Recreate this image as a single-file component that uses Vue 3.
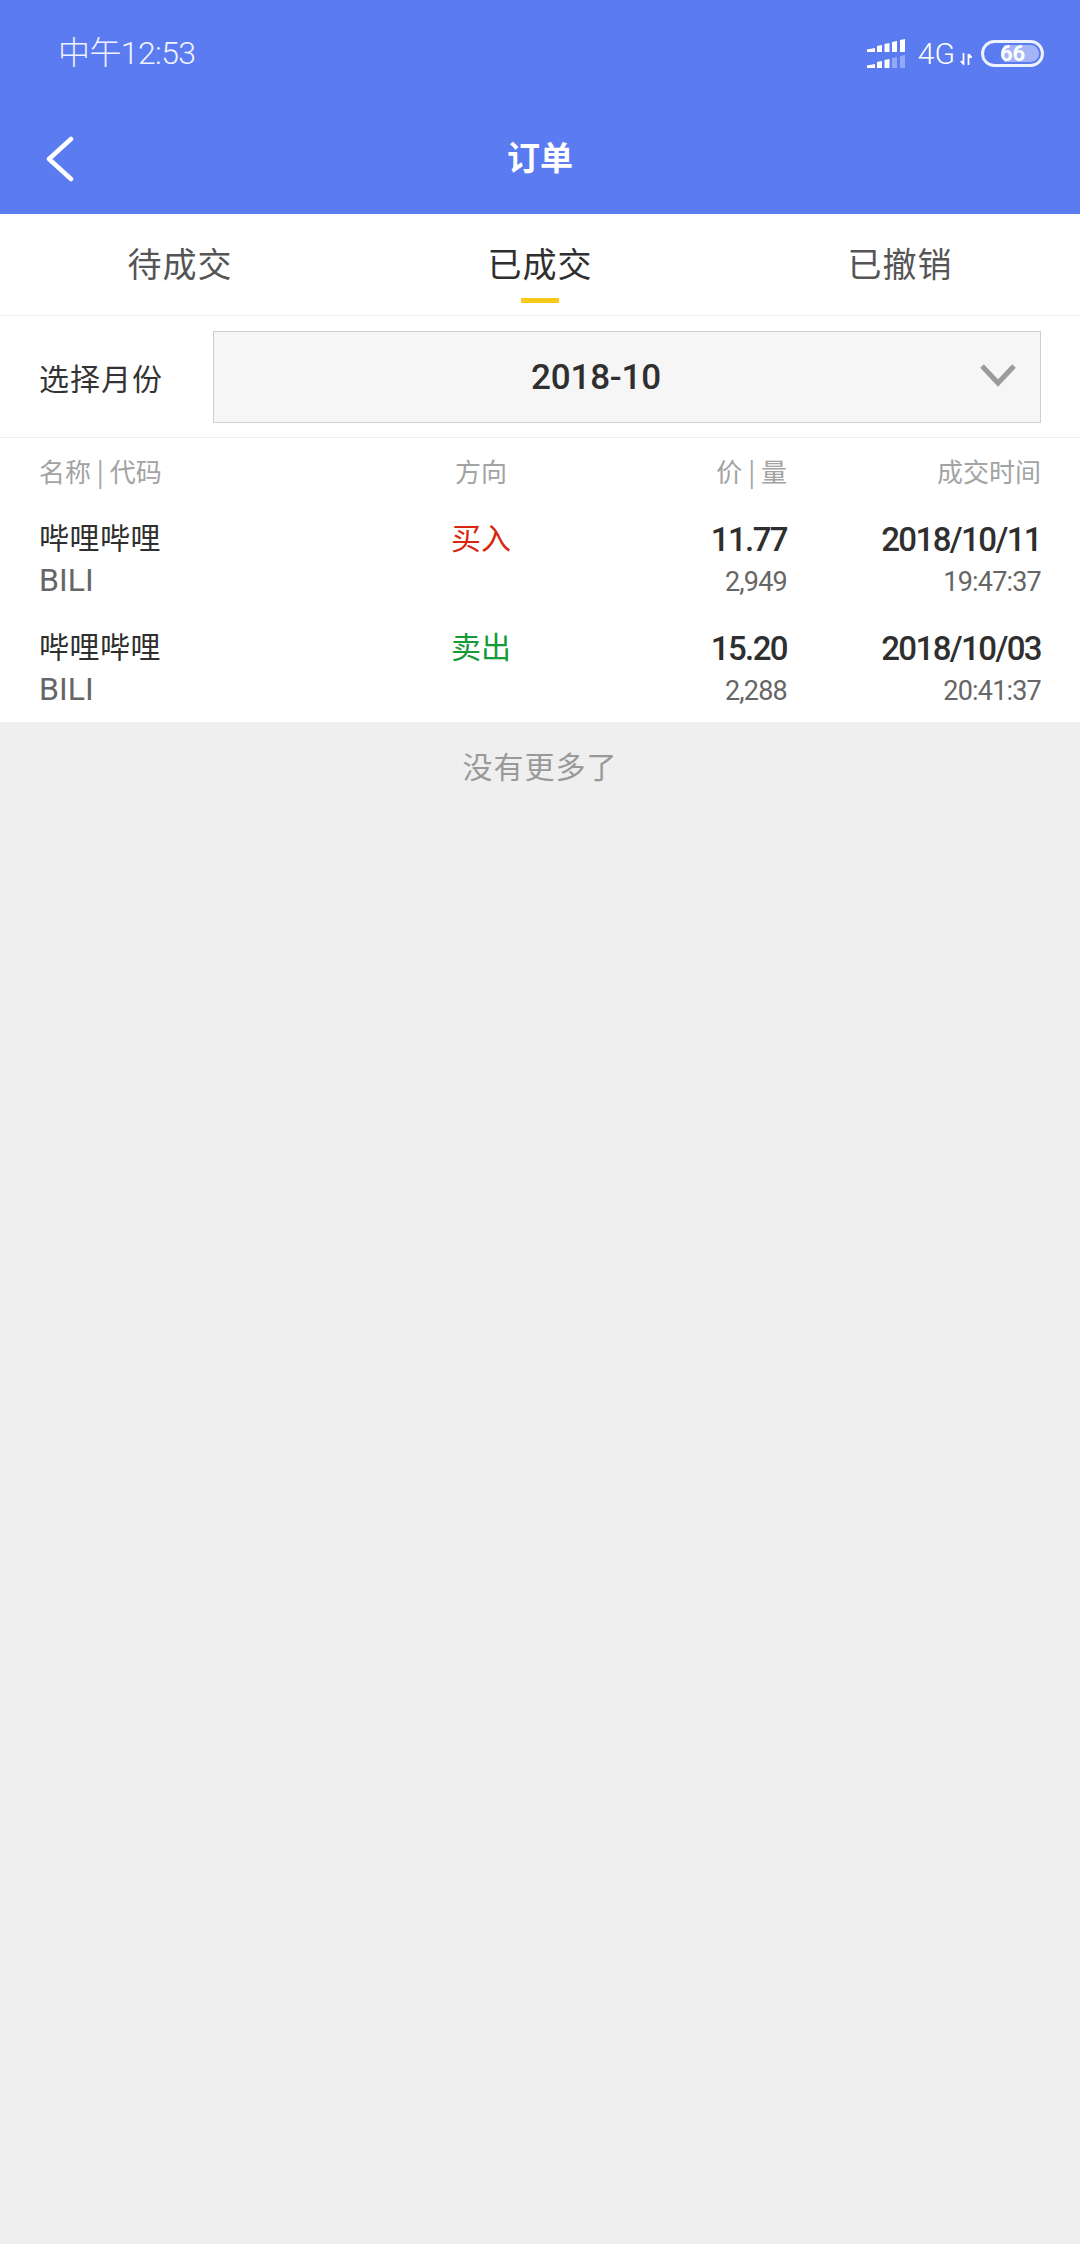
<script setup>
import { ref } from 'vue'

const tabs = ['待成交', '已成交', '已撤销']
const activeTab = ref(1)
const columns = ['名称 | 代码', '方向', '价 | 量', '成交时间']
const orders = [
  { name: '哔哩哔哩', code: 'BILI', side: '买入', buy: true, price: '11.77', qty: '2,949', date: '2018/10/11', time: '19:47:37' },
  { name: '哔哩哔哩', code: 'BILI', side: '卖出', buy: false, price: '15.20', qty: '2,288', date: '2018/10/03', time: '20:41:37' },
]
const bars = [
  'M0 13V10.5L8 9V13Z',
  'M10 13V7L15 6V13Z',
  'M17.5 13V5L22.5 4V13Z',
  'M25 13V3L30 2V13Z',
  'M33 13V1L38 0V13Z',
]
</script>

<template>
  <div class="page">
    <header class="top">
      <div class="status">
        <span class="clock">中午12:53</span>
        <div class="status-right">
          <svg class="signal" width="38" height="29" viewBox="0 0 38 29">
            <path v-for="d in bars" :key="d" :d="d" fill="#fff" />
            <g transform="translate(0 16)">
              <path v-for="(d, i) in bars" :key="d" :d="d" fill="#fff" :opacity="i > 2 ? 0.35 : 1" />
            </g>
          </svg>
          <span class="net">4G</span>
          <svg class="arrows" width="12" height="12" viewBox="0 0 12 12">
            <path d="M3.5 0V11M0.8 8L3.5 11L3.5 8M8.5 12V1M8.5 1L11.2 4H8.5" stroke="#fff" stroke-width="1.8" fill="none" />
          </svg>
          <div class="battery">
            <div class="battery-fill"></div>
            <span class="battery-text">66</span>
          </div>
        </div>
      </div>
      <div class="nav">
        <svg class="back" width="30" height="46" viewBox="0 0 30 46">
          <path d="M26 3L4 23L26 43" stroke="#fff" stroke-width="4.5" stroke-linecap="round" stroke-linejoin="round" fill="none" />
        </svg>
        <span class="title">订单</span>
      </div>
    </header>

    <nav class="tabs">
      <div v-for="(tab, i) in tabs" :key="tab" class="tab" :class="{ active: i === activeTab }" @click="activeTab = i">
        {{ tab }}
      </div>
    </nav>

    <div class="filter">
      <span class="filter-label">选择月份</span>
      <div class="select">
        <span class="select-value">2018-10</span>
        <svg class="select-arrow" width="38" height="24" viewBox="0 0 38 24">
          <path d="M3 3L19 20L35 3" stroke="#9b9b9b" stroke-width="5" fill="none" />
        </svg>
      </div>
    </div>

    <section class="list">
      <div class="row head">
        <span v-for="(col, i) in columns" :key="col" :class="'col-' + i">{{ col }}</span>
      </div>
      <div v-for="order in orders" :key="order.date" class="row order">
        <div class="col-0">
          <div class="name">{{ order.name }}</div>
          <div class="code">{{ order.code }}</div>
        </div>
        <div class="col-1">
          <div class="side" :class="order.buy ? 'buy' : 'sell'">{{ order.side }}</div>
        </div>
        <div class="col-2">
          <div class="num">{{ order.price }}</div>
          <div class="sub">{{ order.qty }}</div>
        </div>
        <div class="col-3">
          <div class="num">{{ order.date }}</div>
          <div class="sub">{{ order.time }}</div>
        </div>
      </div>
    </section>

    <div class="no-more">没有更多了</div>
  </div>
</template>

<style>
html, body {
  margin: 0;
  background: #efefef;
}
</style>

<style scoped>
.page {
  min-height: 2244px;
  background: #efefef;
  font-family: "Noto Sans CJK SC", "Noto Sans", sans-serif;
}
.top {
  background: #5b7bf0;
  color: #fff;
  height: 214px;
}
.status {
  height: 106px;
  padding: 0 36px 0 58px;
  display: flex;
  align-items: center;
  justify-content: space-between;
}
.clock {
  font-family: Roboto, "Noto Sans CJK SC", sans-serif;
  font-size: 32px;
  font-weight: 300;
  line-height: 40px;
  letter-spacing: -0.6px;
  color: #f0f3ff;
}
.status-right {
  display: flex;
  align-items: center;
}
.net {
  margin-left: 13px;
  font-family: Roboto, sans-serif;
  font-size: 30px;
  font-weight: 300;
}
.arrows {
  margin: 12px 9px 0 5px;
}
.battery {
  position: relative;
  width: 63px;
  height: 27px;
  box-sizing: border-box;
  border: 3px solid #eef1ff;
  border-radius: 14px;
  display: flex;
  align-items: center;
  justify-content: center;
  overflow: hidden;
}
.battery-fill {
  position: absolute;
  left: 20px;
  top: 2px;
  bottom: 2px;
  right: 2px;
  background: #a3b5f7;
  border-radius: 0 9px 9px 0;
}
.battery-text {
  position: relative;
  font-family: Roboto, sans-serif;
  font-size: 22px;
  font-weight: 700;
}
.nav {
  position: relative;
  height: 108px;
  display: flex;
  align-items: center;
  justify-content: center;
}
.back {
  position: absolute;
  left: 45px;
  top: 30px;
}
.title {
  font-size: 33px;
  font-weight: 700;
  line-height: 1;
  margin-top: -8px;
}
.tabs {
  height: 101px;
  background: #fff;
  border-bottom: 1px solid #eeeeee;
  display: flex;
}
.tab {
  position: relative;
  flex: 1;
  text-align: center;
  font-size: 34px;
  line-height: 98px;
  letter-spacing: 1px;
  color: #555;
  cursor: pointer;
}
.tab.active {
  color: #2f2f2f;
}
.tab.active::after {
  content: "";
  position: absolute;
  left: 50%;
  margin-left: -19px;
  bottom: 12px;
  width: 38px;
  height: 5px;
  background: #f8c91c;
}
.filter {
  height: 122px;
  box-sizing: border-box;
  background: #fff;
  border-bottom: 1px solid #eeeeee;
  padding: 0 39px;
  display: flex;
  align-items: center;
  justify-content: space-between;
}
.filter-label {
  font-size: 30px;
  letter-spacing: 1px;
  color: #333;
}
.select {
  position: relative;
  box-sizing: border-box;
  width: 828px;
  height: 92px;
  padding-right: 62px;
  background: #f6f6f6;
  border: 1px solid #cfcfcf;
  display: flex;
  align-items: center;
  justify-content: center;
}
.select-value {
  font-family: Roboto, sans-serif;
  font-size: 35px;
  font-weight: 500;
  letter-spacing: -0.2px;
  margin-top: 2px;
  color: #2f2f2f;
}
.select-arrow {
  position: absolute;
  right: 23px;
  top: 31px;
}
.list {
  background: #fff;
  padding-bottom: 1px;
}
.row {
  display: grid;
  grid-template-columns: 361px 162px 225px 254px;
  padding: 0 39px;
}
.col-1 {
  text-align: center;
}
.col-2,
.col-3 {
  text-align: right;
}
.head {
  height: 65px;
  align-items: center;
  font-size: 26px;
  color: #a3a3a3;
}
.order {
  height: 109px;
  box-sizing: border-box;
  padding-top: 14px;
}
.name {
  font-size: 30px;
  line-height: 42px;
  margin-top: -2px;
  margin-bottom: 2px;
  letter-spacing: 0.5px;
  color: #2f2f2f;
}
.code {
  font-family: Roboto, sans-serif;
  font-size: 32px;
  line-height: 42px;
  color: #666;
}
.side {
  font-size: 30px;
  line-height: 42px;
  margin-top: -2px;
}
.buy {
  color: #d9260f;
}
.sell {
  color: #149a37;
}
.num {
  font-family: Roboto, sans-serif;
  font-size: 33px;
  font-weight: 500;
  line-height: 42px;
  letter-spacing: -1.6px;
  margin-top: 2px;
  color: #2f2f2f;
}
.sub {
  font-family: Roboto, sans-serif;
  font-size: 27px;
  line-height: 42px;
  letter-spacing: -0.8px;
  color: #666;
}
.no-more {
  padding-top: 22px;
  text-align: center;
  font-size: 30px;
  line-height: 42px;
  letter-spacing: 1px;
  color: #999;
}
</style>
